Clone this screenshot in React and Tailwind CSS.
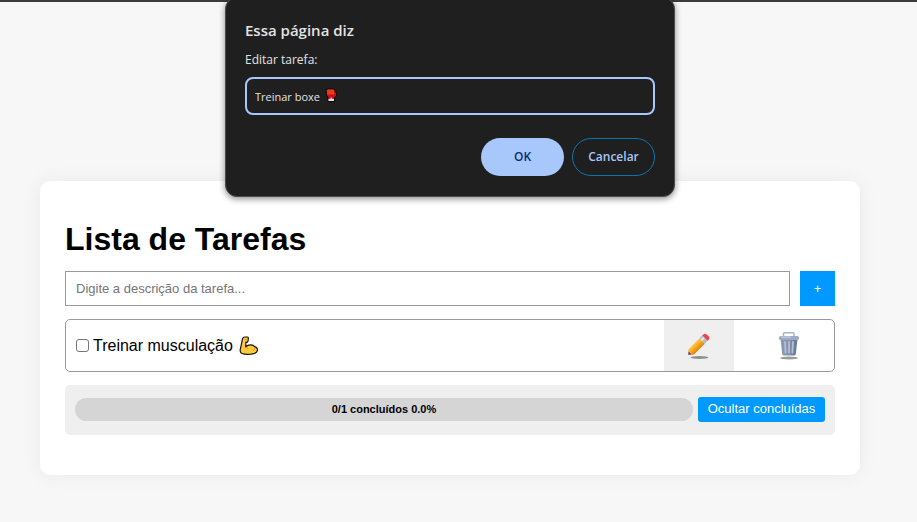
import React from "react";

function Pencil() {
  return (
    <svg width="24" height="28" viewBox="0 0 24 28" aria-hidden="true">
      <defs>
        <linearGradient id="wood" x1="0" y1="0" x2="0" y2="1">
          <stop offset="0" stopColor="#ffc94a" />
          <stop offset="0.45" stopColor="#fbab1c" />
          <stop offset="1" stopColor="#d9820c" />
        </linearGradient>
      </defs>
      <ellipse cx="12.5" cy="25.5" rx="9" ry="1.5" fill="#8f8f8f" />
      <g transform="translate(1.3 22.8) rotate(-45)">
        <path d="M0 0 L4 -3.8 V3.8 Z" fill="#e9b678" />
        <path d="M0 0 L2.6 -2.2 V2.2 Z" fill="#6b2f86" />
        <path d="M3 -2.9 L4.5 -3.8 H19.5 V3.8 H4.5 L3 2.9 Z" fill="url(#wood)" />
        <rect x="19.5" y="-3.8" width="4" height="7.6" fill="#b3bccb" />
        <rect x="19.5" y="-2" width="4" height="2" fill="#dfe5ee" />
        <path d="M23.5 -3.8 H25 Q27.5 -3.8 27.5 0 Q27.5 3.8 25 3.8 H23.5 Z" fill="#f04350" />
      </g>
    </svg>
  );
}

function Trash() {
  return (
    <svg width="24" height="28" viewBox="0 0 24 28" aria-hidden="true">
      <defs>
        <linearGradient id="bin" x1="0" y1="0" x2="1" y2="0">
          <stop offset="0" stopColor="#8b9bb4" />
          <stop offset="0.5" stopColor="#8392ac" />
          <stop offset="1" stopColor="#66748f" />
        </linearGradient>
      </defs>
      <ellipse cx="12" cy="26" rx="9" ry="1.4" fill="#9a9a9a" />
      <path d="M6.5 5 V1.8 Q6.5 0.8 7.5 0.8 H16 Q17 0.8 17 1.8 V5" fill="none" stroke="#a9b5c9" strokeWidth="1.5" />
      <path d="M3.5 7 H20.5 L18.8 22 Q18.6 23.5 17 23.5 H7 Q5.4 23.5 5.2 22 Z" fill="url(#bin)" />
      <rect x="2" y="4" width="20" height="4" rx="1.6" fill="#9dabc2" />
      <rect x="4" y="4.4" width="10" height="1.4" rx="0.7" fill="#c5cede" />
      <path d="M8 10 L8.6 20.5 M12 10 V20.5 M16 10 L15.4 20.5" stroke="#b4c0d3" strokeWidth="1.8" strokeLinecap="round" />
    </svg>
  );
}

function Biceps() {
  return (
    <svg width="20" height="20" viewBox="0 0 20 20" aria-hidden="true">
      <path
        d="M3.6 2.6 Q4 1 6 1 H8.3 Q9.5 1 9.3 2.4 L9 5.2 Q8.8 6.5 7.5 6.3 L6.9 6.2 L6.7 10.8 Q9 8.6 12 8.8 Q14.4 9 15.6 10.6 Q18.6 11.4 18.5 14 Q18.2 17.4 12 18.2 Q6 18.8 2.5 17.2 Q0.9 16.4 1.2 13.8 Z"
        fill="#ffc83d"
        stroke="#17150f"
        strokeWidth="1.2"
        strokeLinejoin="round"
      />
      <path d="M5.8 3.5 L8.6 3.7 M7 11 Q7.8 12.4 9.4 12.4 M14 14.5 Q16 13.8 16 12" fill="none" stroke="#d08a16" strokeWidth="0.8" />
    </svg>
  );
}

function Glove() {
  return (
    <svg
      className="pointer-events-none absolute top-[11px] left-[80px]"
      width="13"
      height="15"
      viewBox="0 0 13 15"
      aria-hidden="true"
    >
      <path
        d="M1.3 2.8 Q1.3 1 3.2 1 H8 Q9.8 1 9.8 2.8 V3.8 Q12 4 12 6 Q12 8.6 9.5 9.6 V13.4 H3 V9.4 Q1.3 7.6 1.3 5.4 Z"
        fill="#c50f1f"
        stroke="#050505"
        strokeWidth="1"
      />
      <path d="M1.8 2.8 Q1.8 1.5 3.2 1.5 H8 Q9.3 1.5 9.3 2.8 V6.6 H2.2 Z" fill="#f03a17" />
      <path d="M3.5 10.8 H9 V13 H3.5 Z" fill="#e0dcdc" />
      <path d="M6.2 9.4 V12" stroke="#e0dcdc" strokeWidth="1" />
    </svg>
  );
}

function PromptDialog() {
  return (
    <div className="absolute inset-x-0 -top-[3px] flex justify-center pr-[17px]">
      <form
        role="dialog"
        aria-labelledby="prompt-title"
        className="w-[450px] rounded-xl border border-[#4d4d4d] bg-[#1f1f1f] px-[19px] pt-[22px] pb-5 font-['Open_Sans','Noto_Sans',sans-serif] text-[#e3e3e3] shadow-[0_2px_6px_rgba(0,0,0,0.45)]"
      >
        <h2 id="prompt-title" className="text-[15px] leading-5 font-semibold">
          Essa página diz
        </h2>
        <label htmlFor="prompt-value" className="mt-2.5 block text-xs leading-5">
          Editar tarefa:
        </label>
        <div className="relative mt-[7px]">
          <input
            id="prompt-value"
            type="text"
            defaultValue="Treinar boxe"
            className="block h-[38px] w-full rounded-lg border-2 border-[#a8c7fa] bg-transparent px-2 text-[11px] outline-none"
          />
          <Glove />
        </div>
        <div className="mt-[23px] flex justify-end gap-2 text-xs font-semibold">
          <button type="button" className="h-[38px] w-[83px] rounded-full bg-[#a8c7fa] text-[#062e6f]">
            OK
          </button>
          <button type="button" className="h-[38px] w-[83px] rounded-full border border-[#0b76ad] text-[#a8c7fa]">
            Cancelar
          </button>
        </div>
      </form>
    </div>
  );
}

export default function App() {
  return (
    <div className="relative min-h-screen overflow-hidden bg-[#f7f7f7] font-['Liberation_Sans',Arial,sans-serif] text-black">
      <div className="h-0.5 bg-[#3c3a3d]" />
      <main className="mt-[179px] mr-[57px] mb-11 ml-10 rounded-[10px] bg-white px-[25px] pt-[38px] pb-10 shadow-[0_0_20px_rgba(0,0,0,0.06)]">
        <h1 className="text-[32px] leading-10 font-bold">Lista de Tarefas</h1>
        <form className="mt-3 flex gap-2.5">
          <input
            type="text"
            aria-label="Descrição da tarefa"
            placeholder="Digite a descrição da tarefa..."
            className="h-[35px] min-w-0 flex-1 border border-[#999] px-2.5 text-[13px] outline-none placeholder:text-[#757575]"
          />
          <button type="button" className="size-[35px] bg-[#0099ff] text-[13px] text-white">
            +
          </button>
        </form>
        <ul className="mt-[13px]">
          <li className="flex items-center rounded-[5px] border border-[#999] px-2.5">
            <label className="flex flex-1 items-center text-base">
              <input
                type="checkbox"
                className="mr-1 size-[13px] appearance-none rounded-[3px] border border-[#767676] bg-white"
              />
              Treinar musculação
              <span className="ml-1.5">
                <Biceps />
              </span>
            </label>
            <div className="flex gap-5">
              <button type="button" aria-label="Editar" className="flex h-[51px] w-[70px] items-center justify-center bg-[#efefef]">
                <Pencil />
              </button>
              <button type="button" aria-label="Excluir" className="flex h-[51px] w-[70px] items-center justify-center">
                <Trash />
              </button>
            </div>
          </li>
        </ul>
        <section className="mt-[13px] flex h-[50px] items-center gap-[5px] rounded-[5px] bg-[#efefef] px-2.5 pb-0.5">
          <div className="flex h-[23px] flex-1 items-center justify-center rounded-full bg-[#d5d5d5] text-[11px] font-bold">
            0/1 concluídos 0.0%
          </div>
          <button type="button" className="h-[25px] w-[127px] rounded-[3px] bg-[#0099ff] text-[13px] text-white">
            Ocultar concluídas
          </button>
        </section>
      </main>
      <PromptDialog />
    </div>
  );
}
